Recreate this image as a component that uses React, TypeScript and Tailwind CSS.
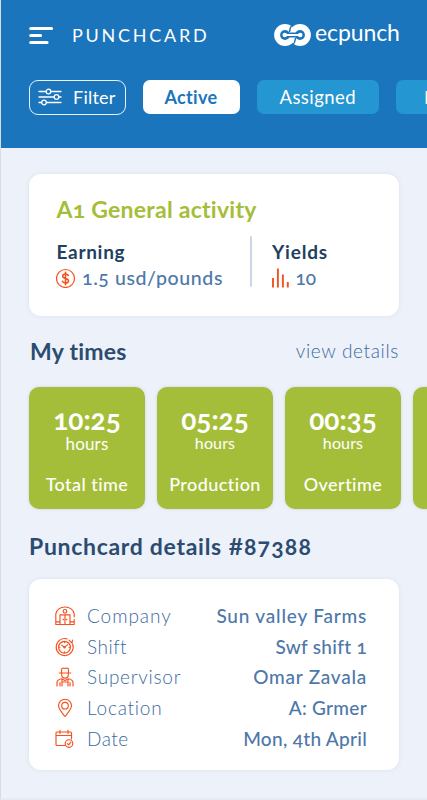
import type { ReactNode } from "react";

const stroke = { fill: "none", stroke: "#f4511e", strokeWidth: 1.15, strokeLinecap: "round", strokeLinejoin: "round" } as const;

function Logo() {
  return (
    <div className="flex items-start">
      <svg width="38" height="24" viewBox="0 0 38 24" className="shrink-0">
        <circle cx="11" cy="13" r="10.900" fill="#fff" />
        <circle cx="26" cy="13" r="10.900" fill="#fff" />
        <circle cx="11" cy="13" r="4.900" fill="#1b75bc" />
        <circle cx="26" cy="13" r="4.900" fill="#1b75bc" />
        <path d="M11 13H26" stroke="#1b75bc" strokeWidth="5" />
        <path d="M20 1Q16 4 15.500 10M21.500 16Q21 22 17 25" fill="none" stroke="#1b75bc" strokeWidth="1.500" />
        <path d="M11 13H26" stroke="#fff" strokeWidth="2" />
        <circle cx="10.800" cy="13" r="2.300" fill="#fff" />
        <circle cx="26.200" cy="13" r="2.300" fill="#fff" />
      </svg>
      <span className="ml-[3px] w-[87px] text-[23px] leading-[21px] tracking-[-0.1px] text-white">ecpunch</span>
    </div>
  );
}

function BarnIcon() {
  return (
    <svg width="20" height="20" viewBox="0 0 20 20" {...stroke}>
      <path d="M.8 18.500V7.800C1.500 3.800 5.300 1 10 1s8.500 2.800 9.200 6.800v3M19.200 13.500v5H.8M.8 15.800h3.500M15.700 15.800h3.500M5 18.500V8.800h10v9.700M10 9v9.500" />
      <path d="M8.300 13.500h.2M11.500 13.500h.2" strokeWidth="1.500" />
      <circle cx="10" cy="5.300" r="1.800" />
    </svg>
  );
}

function ClockIcon() {
  return (
    <svg width="20" height="20" viewBox="0 0 20 20" {...stroke}>
      <path d="M12 1.900A8.500 8.500 0 1 0 17.600 7M14 3.200l3 2.800.6-3" />
      <circle cx="9.500" cy="10.200" r="5.900" />
      <path d="M6.800 8.200l2.700 2.200 3.200-2.800M9.500 5v.6M9.500 14.800v.6M4.400 10.200H5M14 10.200h.6" />
      <circle cx="9.500" cy="10.200" r=".7" />
    </svg>
  );
}

function FarmerIcon() {
  return (
    <svg width="20" height="20" viewBox="0 0 20 20" {...stroke}>
      <path d="M4.200 6h11.600M6.500 6V2.800c0-1.200 1-1.800 2-1.800l1.500.5 1.500-.5c1 0 2 .6 2 1.800V6M6.700 6.500v1.300a3.300 3.300 0 0 0 6.600 0V6.500M2 19v-3.500c0-1.900 1.300-2.900 4.500-3.700M18 19v-3.500c0-1.900-1.300-2.900-4.500-3.700M5 15.500V19M15 15.500V19M7 11.700v3.300h6v-3.300M8 12.500l2 1 2-1M7 15v4M13 15v4" />
    </svg>
  );
}

function PinIcon() {
  return (
    <svg width="20" height="20" viewBox="0 0 20 20" {...stroke}>
      <path d="M10 18.500C7 14.500 3.500 11 3.500 7.700a6.500 6.500 0 0 1 13 0C16.500 11 13 14.500 10 18.500z" />
      <circle cx="10" cy="7.700" r="3.300" />
    </svg>
  );
}

function CalendarIcon() {
  return (
    <svg width="20" height="20" viewBox="0 0 20 20" {...stroke}>
      <path d="M10 16.500H2a1 1 0 0 1-1-1V4a1 1 0 0 1 1-1h13.500a1 1 0 0 1 1 1v6M1 6.500h15.500M5 1.200v3.300M13 1.200v3.300" />
      <circle cx="14" cy="14.500" r="3.800" />
      <path d="M12.400 14.700l1.300 1.200 2.200-2.700" />
    </svg>
  );
}

const tileBox =
  "flex h-[122px] w-[116px] shrink-0 flex-col items-center rounded-[10px] bg-[#a5be39] pt-[18.5px] text-white shadow-[0_0_3px_rgba(90,120,160,0.25)]";

function Tile({ time, label, hoursClass }: { time: string; label: string; hoursClass: string }) {
  return (
    <div className={tileBox}>
      <span className="h-[30px] text-[28px] font-bold leading-[28px]">{time}</span>
      <span className={"h-[20px] tracking-[0.15px] " + hoursClass}>hours</span>
      <span className="mt-[16.5px] text-[18px] font-medium leading-[24px] tracking-[0.45px]">{label}</span>
    </div>
  );
}

function Row({ icon, name, value, nameClass, valueClass }: { icon: ReactNode; name: string; value: string; nameClass: string; valueClass: string }) {
  return (
    <div className="flex h-[30.7px] items-center text-[19px] leading-[24px]">
      <span className="w-[32px] shrink-0">{icon}</span>
      <span className={"font-light text-[#3c6aa0] " + nameClass}>{name}</span>
      <span className={"ml-auto font-medium text-[#4d78a9] " + valueClass}>{value}</span>
    </div>
  );
}

export default function App() {
  return (
    <div className="h-[800px] w-[427px] overflow-hidden border-b-2 border-l border-b-[#e6eaf3] border-l-[#d9dde3] bg-[#edf1f9] font-['Lato','Open_Sans',sans-serif] oldstyle-nums">
      <header className="h-[147.5px] bg-[#1b75bc] pt-[22px] text-white">
        <div className="flex h-6 items-start pl-7">
          <svg width="25" height="24" viewBox="0 0 25 24" stroke="#fff" strokeWidth="3.200" strokeLinecap="round">
            <path d="M1.800 6.500H22.500M1.800 13.500H11.500M1.800 20.500H18" />
          </svg>
          <span className="ml-[18px] w-[202px] text-[18px] leading-[26px] tracking-[2.75px]">PUNCHCARD</span>
          <Logo />
        </div>
        <nav className="mt-[33.5px] flex items-center overflow-hidden pl-7 text-[18px] leading-[24px]">
          <div className="flex h-[35px] w-[97px] shrink-0 items-center rounded-[9px] border border-white/90 pl-[8px]">
            <svg width="24" height="20" viewBox="0 0 24 20" fill="none" stroke="#fff" strokeWidth="1.300" strokeLinecap="round">
              <path d="M1 4.500H8M13 4.500H23M1 10H16M21 10H23M1 15.500H3.500M8.500 15.500H23" />
              <circle cx="10.500" cy="4.500" r="2.300" />
              <circle cx="18.500" cy="10" r="2.300" />
              <circle cx="6" cy="15.500" r="2.300" />
            </svg>
            <span className="ml-[11px] tracking-[0.25px]">Filter</span>
          </div>
          <div className="ml-[16.5px] flex h-[33.5px] w-[97px] shrink-0 items-center justify-center rounded-[7px] bg-white font-bold tracking-[0.35px] text-[#1b75bc]">Active</div>
          <div className="ml-[17px] flex h-[33.5px] w-[122.5px] shrink-0 items-center justify-center rounded-[7px] bg-[#2496d1] text-[18.5px] tracking-[0.45px]">Assigned</div>
          <div className="ml-[17px] flex h-[33.5px] w-[123px] shrink-0 items-center rounded-[7px] bg-[#2496d1] pl-[28px]">Pending</div>
        </nav>
      </header>

      <main className="pl-7 pt-[26px]">
        <section className="h-[142px] w-[370px] rounded-[12px] bg-white pl-[27.5px] pt-[21px] shadow-[0_0_4px_rgba(110,140,180,0.15)]">
          <h1 className="text-[23px] font-bold leading-[28px] tracking-[0.25px] text-[#a5be39]">A1 General activity</h1>
          <div className="mt-[13px] flex">
            <div className="w-[193px]">
              <div className="mt-[4px] text-[19px] font-bold leading-[24px] tracking-[0.7px] text-[#213f5e]">Earning</div>
              <div className="mt-[2px] flex items-center text-[19.5px] leading-[24px] text-[#4d78a9]">
                <svg width="20" height="20" viewBox="0 0 20 20" {...stroke} className="ml-[-0.5px]">
                  <circle cx="9.500" cy="10.500" r="9" strokeWidth="1.200" />
                  <path d="M12.300 7.500C11.700 6.400 10.700 6 9.500 6c-1.700 0-2.800.9-2.800 2.200 0 3 5.800 1.500 5.800 4.500 0 1.400-1.200 2.300-2.900 2.300-1.400 0-2.500-.6-3.100-1.700M9.500 4.200v12.600" strokeWidth="1.600" />
                </svg>
                <span className="ml-[6px] font-medium tracking-[0.6px]">1.5 usd/pounds</span>
              </div>
            </div>
            <div className="h-[51px] w-[2px] rounded bg-[#ccd6e9]" />
            <div className="ml-[20.5px]">
              <div className="mt-[4px] text-[19px] font-bold leading-[24px] tracking-[0.8px] text-[#213f5e]">Yields</div>
              <div className="mt-[2px] flex items-center text-[19px] leading-[24px] text-[#4d78a9]">
                <svg width="18" height="20" viewBox="0 0 18 20" stroke="#f4511e" strokeWidth="1.900">
                  <path d="M1 10V19.500M5.900 .5V19.500M10.900 6.500V19.500M15.800 14V19.500" />
                </svg>
                <span className="ml-[5.5px] font-medium">10</span>
              </div>
            </div>
          </div>
        </section>

        <div className="mt-[21px] flex w-[370px] items-start justify-between">
          <h2 className="pl-[1px] text-[23px] font-bold leading-[28px] tracking-[0.25px] text-[#2b4c70]">My times</h2>
          <span className="text-[19px] font-light leading-[28px] tracking-[0.65px] text-[#3c6aa0]">view details</span>
        </div>

        <div className="mt-[22px] flex h-[122px] gap-3">
          <Tile time="10:25" label="Total time" hoursClass="text-[17px] leading-[18px]" />
          <Tile time="05:25" label="Production" hoursClass="text-[16px] leading-[16px]" />
          <Tile time="00:35" label="Overtime" hoursClass="text-[16px] leading-[16px]" />
          <div className={tileBox} />
        </div>

        <h2 className="mt-[23.5px] text-[23px] font-bold leading-[28px] tracking-[0.7px] text-[#2b4c70]">
          Punchcard details <span className="lining-nums">#</span><span className="tracking-[1.2px]">87388</span>
        </h2>

        <section className="mt-[19px] h-[191px] w-[370px] rounded-[12px] bg-white pl-[26px] pr-[32px] pt-[21.5px] shadow-[0_0_4px_rgba(110,140,180,0.15)]">
          <Row icon={<BarnIcon />} name="Company" value="Sun valley Farms" nameClass="tracking-[0.95px]" valueClass="tracking-[0.8px]" />
          <Row icon={<ClockIcon />} name="Shift" value="Swf shift 1" nameClass="tracking-[0.5px]" valueClass="tracking-[0.3px]" />
          <Row icon={<FarmerIcon />} name="Supervisor" value="Omar Zavala" nameClass="tracking-[0.75px]" valueClass="tracking-[0.75px]" />
          <Row icon={<PinIcon />} name="Location" value="A: Grmer" nameClass="tracking-[0.8px]" valueClass="tracking-[0.3px]" />
          <Row icon={<CalendarIcon />} name="Date" value="Mon, 4th April" nameClass="tracking-[0.5px]" valueClass="tracking-[0.3px]" />
        </section>
      </main>
    </div>
  );
}
